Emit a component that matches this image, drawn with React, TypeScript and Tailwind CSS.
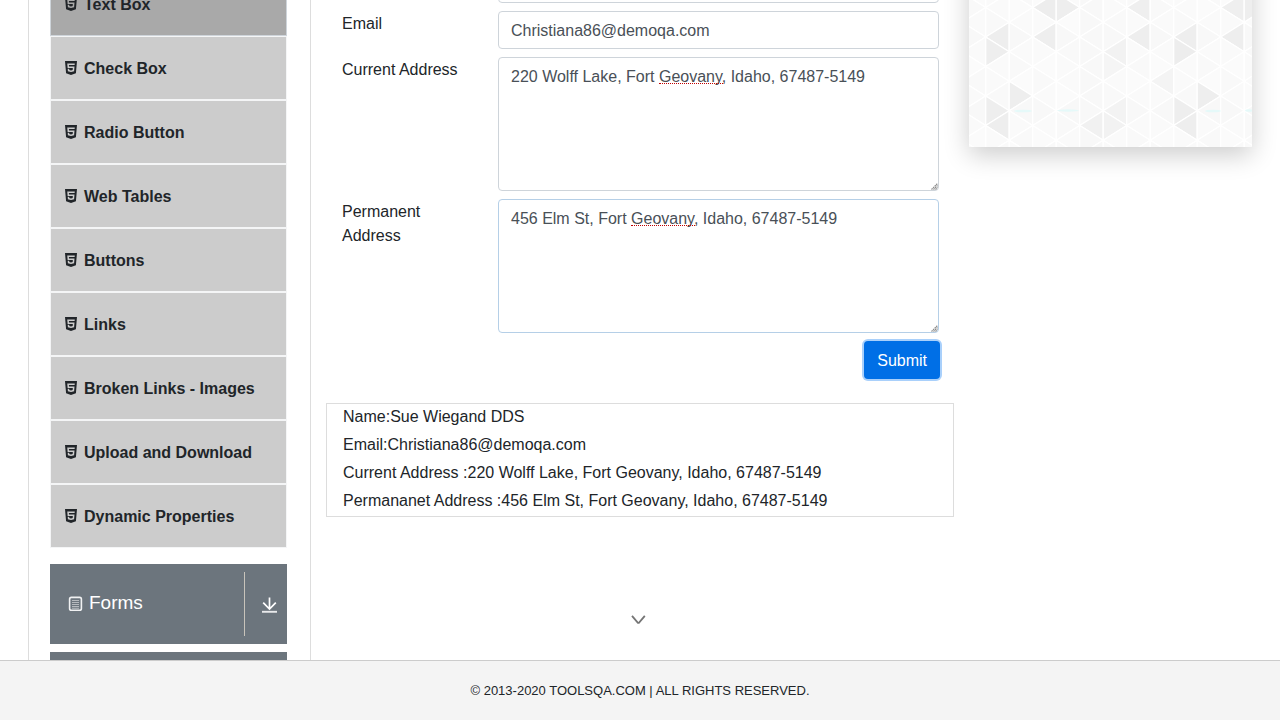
import { FaHtml5 } from "react-icons/fa";

const menuItems = [
  "Check Box",
  "Radio Button",
  "Web Tables",
  "Buttons",
  "Links",
  "Broken Links - Images",
  "Upload and Download",
  "Dynamic Properties",
];

const COL = 23.5;
const ROW = 29.5;
const LEFT = 16.7;
const TOP = 7.5;

// "strip:direction:apex" -> shade; apex is counted in half rows from TOP.
const shades: Record<string, string> = {
  "2:L:0": "#ededed",
  "3:R:0": "#eeeeee",
  "6:L:0": "#efefef",
  "10:L:0": "#efefef",
  "11:R:0": "#eeeeee",
  "0:L:2": "#eeeeee",
  "2:L:2": "#eeeeee",
  "6:L:2": "#eeeeee",
  "8:L:2": "#eeeeee",
  "10:L:2": "#eeeeee",
  "0:R:3": "#eeeeee",
  "8:R:3": "#ededed",
  "5:L:3": "#f2f2f2",
  "1:R:6": "#eeeeee",
  "9:R:6": "#eeeeee",
  "0:R:7": "#eeeeee",
  "8:R:7": "#eeeeee",
  "0:L:8": "#eeeeee",
  "8:L:8": "#eeeeee",
  "4:L:8": "#f1f1f1",
  "5:R:8": "#f2f2f2",
  "5:L:7": "#f3f3f3",
  "5:R:4": "#f5f5f5",
  "7:L:5": "#f4f4f4",
  "3:R:5": "#f6f6f6",
};
const pale = ["#f9f9f9", "#fafafa", "#f8f8f8", "#fafafa", "#fbfbfb"];

function TrianglePattern() {
  const triangles = [];
  for (let strip = -1; strip < 12; strip++) {
    const x0 = LEFT + strip * COL;
    const x1 = x0 + COL;
    for (let half = -4; half < 12; half++) {
      const y = TOP + (half * ROW) / 2;
      const pointsLeft = (((half + strip) % 2) + 2) % 2 === 0;
      const dir = pointsLeft ? "L" : "R";
      const apex = pointsLeft ? x0 : x1;
      const base = pointsLeft ? x1 : x0;
      const wrapped = (strip + 8) % 8;
      const fill = shades[`${strip}:${dir}:${half}`] ?? pale[(wrapped * 3 + (half + 4) * (7 + wrapped * 2)) % 5];
      triangles.push(
        <polygon
          key={`${strip}:${half}`}
          points={`${apex},${y} ${base},${y - ROW / 2} ${base},${y + ROW / 2}`}
          fill={fill}
          stroke="#ffffff"
          strokeWidth="1.3"
          strokeLinejoin="round"
        />,
      );
    }
  }
  return (
    <svg className="block h-full w-full" viewBox="0 -35 283 182" preserveAspectRatio="xMinYMax slice" aria-hidden="true">
      <rect y="-35" width="283" height="182" fill="#ffffff" />
      {triangles}
      <g fill="#d9fbfb" opacity="0.6">
        <ellipse cx="54" cy="111" rx="9" ry="1.3" />
        <ellipse cx="99" cy="110.5" rx="11" ry="1.2" />
        <ellipse cx="244" cy="111" rx="8" ry="1.3" />
        <ellipse cx="280" cy="110.5" rx="4" ry="1.2" />
      </g>
    </svg>
  );
}

function FormsIcon() {
  return (
    <svg className="h-4 w-4" viewBox="0 0 16 16" fill="none" aria-hidden="true">
      <rect x="1.6" y="1.4" width="11.8" height="12.8" rx="1.8" stroke="#ffffff" strokeOpacity="0.9" strokeWidth="1.6" />
      <path d="M4 4.5h7M4 6.5h7M4 8.5h7M4 10.5h7M4 12.2h7" stroke="#ffffff" strokeOpacity="0.5" strokeWidth="1.1" />
    </svg>
  );
}

function ExpandIcon() {
  return (
    <svg className="h-4 w-4" viewBox="0 0 16 16" fill="none" stroke="#ffffff" aria-hidden="true">
      <path d="M7.5 0.5V12M1.2 5.6L7.5 12L13.8 5.6" strokeWidth="1.7" />
      <path d="M0 14.8H15" strokeWidth="1.9" strokeOpacity="0.85" />
    </svg>
  );
}

function Address({ id, label, value, active }: { id: string; label: string; value: string; active?: boolean }) {
  return (
    <>
      <label htmlFor={id} className="px-4 pt-px">
        {label}
      </label>
      <div className="relative px-[15px]">
        <textarea
          id={id}
          rows={5}
          defaultValue={value}
          spellCheck={false}
          className={`block w-full resize-none rounded border bg-white px-3 pt-[7px] pb-[5px] text-[#495057] outline-none ${active ? "border-[#b5cfe7]" : "border-[#ced4da]"}`}
        />
        <span
          aria-hidden="true"
          className={`pointer-events-none absolute top-[26px] w-16 border-b border-dotted border-[#c00000] ${active ? "left-[148px]" : "left-[176px]"}`}
        />
        <svg className="pointer-events-none absolute right-4 bottom-px h-2 w-2" viewBox="0 0 8 8" stroke="#8a8a8a" aria-hidden="true">
          <path d="M1.5 7.5L7.5 1.5M3.5 7.5L7.5 3.5M5.5 7.5L7.5 5.5" strokeWidth="1.2" strokeDasharray="1.6 0.6" />
        </svg>
      </div>
    </>
  );
}

export default function App() {
  return (
    <div className="flex h-screen flex-col bg-white font-['Liberation_Sans',Arial,sans-serif] text-base text-[#212529]">
      <div className="min-h-0 flex-1 overflow-hidden">
        <div className="-mt-[35px] grid grid-cols-[283px_minmax(0,1fr)_283px] px-7">
          <nav className="border-x border-[#dddddd] pt-[7px] pr-[23px] pl-[21px]">
            <ul className="mb-4 font-bold">
              <li>
                <a href="#text-box" className="flex h-16 items-center border border-[#ced4da] bg-[#a9a9a9] px-[14px] pt-0.5">
                  <FaHtml5 className="mr-[7px] mb-0.5 h-4 w-3" />
                  Text Box
                </a>
              </li>
              {menuItems.map((item) => (
                <li key={item}>
                  <a href={`#${item.toLowerCase().replace(/ /g, "-")}`} className="flex h-16 items-center border border-[#f4f5f6] bg-[#cccccc] px-[14px] pt-0.5">
                    <FaHtml5 className="mr-[7px] mb-0.5 h-4 w-3" />
                    {item}
                  </a>
                </li>
              ))}
            </ul>
            <button type="button" className="flex h-20 w-full items-center bg-[#6c757d] py-2 pl-[18px] text-white">
              <FormsIcon />
              <span className="mb-px ml-[5px] text-[19px]">Forms</span>
              <span className="ml-auto flex h-full w-[43px] items-center justify-center border-l border-[#c8c4bb] pt-0.5 pl-[7px]">
                <ExpandIcon />
              </span>
            </button>
            <button type="button" aria-label="Next section" className="mt-2 block h-20 w-full bg-[#6c757d]" />
          </nav>

          <main className="px-[15px]">
            <form onSubmit={(e) => e.preventDefault()}>
              <div className="grid grid-cols-[1fr_3fr] gap-y-2">
                <label htmlFor="name" className="px-4 pt-px">
                  Full Name
                </label>
                <div className="px-[15px]">
                  <input id="name" type="text" defaultValue="Sue Wiegand DDS" className="block h-[38px] w-full rounded border border-[#ced4da] px-3 pt-0.5 text-[#495057] outline-none" />
                </div>
                <label htmlFor="email" className="px-4 pt-px">
                  Email
                </label>
                <div className="px-[15px]">
                  <input id="email" type="email" defaultValue="Christiana86@demoqa.com" className="block h-[38px] w-full rounded border border-[#ced4da] px-3 pt-0.5 text-[#495057] outline-none" />
                </div>
                <Address id="current" label="Current Address" value="220 Wolff Lake, Fort Geovany, Idaho, 67487-5149" />
                <Address id="permanent" label="Permanent Address" value="456 Elm St, Fort Geovany, Idaho, 67487-5149" active />
              </div>
              <div className="mt-2 flex justify-end pr-[14px]">
                <button type="submit" className="h-[38px] rounded bg-[#006fe6] px-[13px] pt-0.5 text-white ring-2 ring-[#a9d0fb]">
                  Submit
                </button>
              </div>
            </form>
            <div className="mt-6 border border-[#dddddd] px-4 pt-px pb-[3px]">
              <div className="space-y-1">
                <p>Name:Sue Wiegand DDS</p>
                <p>Email:Christiana86@demoqa.com</p>
                <p>Current Address :220 Wolff Lake, Fort Geovany, Idaho, 67487-5149</p>
                <p>Permananet Address :456 Elm St, Fort Geovany, Idaho, 67487-5149</p>
              </div>
            </div>
            <div className="mt-[94px] flex justify-center pr-1">
              <button type="button" aria-label="Show more">
                <svg className="block h-4 w-4" viewBox="0 0 16 16" fill="none" stroke="#757575" aria-hidden="true">
                  <path d="M2 4.8L7.9 11.8H8.9L14.8 4.8" strokeWidth="1.8" />
                </svg>
              </button>
            </div>
          </main>

          <aside>
            <div className="h-[182px] shadow-[0_8px_24px_rgba(0,0,0,0.2)]">
              <TrianglePattern />
            </div>
          </aside>
        </div>
      </div>
      <footer className="flex h-[60px] items-center justify-center border-t border-[#cccccc] bg-[#f4f4f4] text-[13px]">
        © 2013-2020 TOOLSQA.COM | ALL RIGHTS RESERVED.
      </footer>
    </div>
  );
}
